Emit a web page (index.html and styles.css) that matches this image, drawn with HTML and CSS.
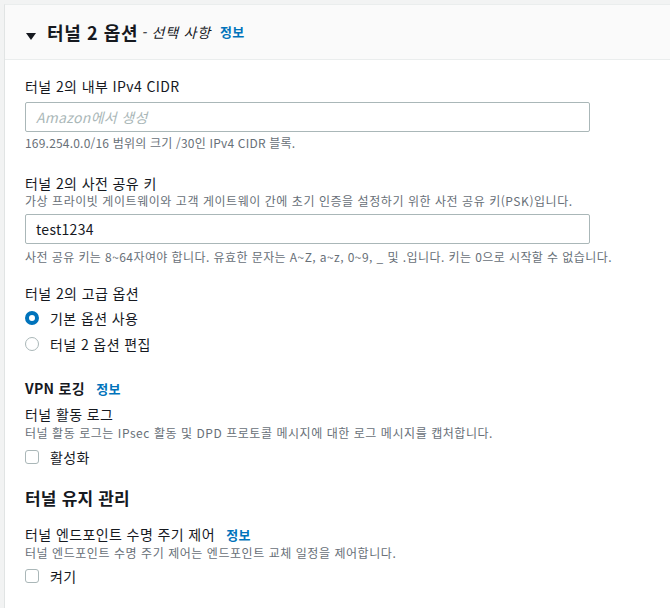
FILE: index.html
```html
<!DOCTYPE html>
<html lang="ko">
<head>
<meta charset="utf-8">
<link rel="stylesheet" href="styles.css">
</head>
<body>
<div class="panel">
  <div class="header">
    <span class="caret"></span>
    <h2 class="title">터널 2 옵션</h2>
    <span class="optional">- 선택 사항</span>
    <a class="info">정보</a>
  </div>
  <div class="content">
    <div class="field f1">
      <div class="label">터널 2의 내부 IPv4 CIDR</div>
      <div class="input placeholder">Amazon에서 생성</div>
      <div class="hint">169.254.0.0/16 범위의 크기 /30인 IPv4 CIDR 블록.</div>
    </div>
    <div class="field f2">
      <div class="label">터널 2의 사전 공유 키</div>
      <div class="desc">가상 프라이빗 게이트웨이와 고객 게이트웨이 간에 초기 인증을 설정하기 위한 사전 공유 키(PSK)입니다.</div>
      <div class="input">test1234</div>
      <div class="hint">사전 공유 키는 8~64자여야 합니다. 유효한 문자는 A~Z, a~z, 0~9, _ 및 .입니다. 키는 0으로 시작할 수 없습니다.</div>
    </div>
    <div class="field f3">
      <div class="label">터널 2의 고급 옵션</div>
      <div class="radios">
        <div class="radio-row"><span class="radio checked"></span><span>기본 옵션 사용</span></div>
        <div class="radio-row"><span class="radio"></span><span>터널 2 옵션 편집</span></div>
      </div>
    </div>
    <div class="section s1">
      <div class="subhead">VPN 로깅 <a class="info">정보</a></div>
      <div class="label">터널 활동 로그</div>
      <div class="desc">터널 활동 로그는 IPsec 활동 및 DPD 프로토콜 메시지에 대한 로그 메시지를 캡처합니다.</div>
      <div class="check-row"><span class="checkbox"></span><span>활성화</span></div>
    </div>
    <div class="section s2">
      <div class="heading">터널 유지 관리</div>
      <div class="label">터널 엔드포인트 수명 주기 제어 <a class="info">정보</a></div>
      <div class="desc">터널 엔드포인트 수명 주기 제어는 엔드포인트 교체 일정을 제어합니다.</div>
      <div class="check-row"><span class="checkbox"></span><span>켜기</span></div>
    </div>
  </div>
</div>
</body>
</html>
```
FILE: styles.css
```css
html, body {
  margin: 0;
  padding: 0;
}
body {
  background: #f2f3f3;
  padding: 4px 0 0 4px;
  font-family: "Noto Sans CJK KR", "Noto Sans", sans-serif;
  color: #16191f;
  font-size: 14px;
  height: 604px;
  overflow: hidden;
}
.panel {
  background: #ffffff;
  border-left: 1px solid #e1e4e4;
  border-top: 1px solid #eaeded;
  height: 100%;
}
.header {
  background: #fafafa;
  height: 55px;
  border-bottom: 1px solid #eaeded;
  display: flex;
  align-items: center;
  padding-left: 21px;
  box-sizing: border-box;
}
.caret {
  width: 0;
  height: 0;
  border-left: 5px solid transparent;
  border-right: 5px solid transparent;
  border-top: 7px solid #16191f;
  margin-top: 8px;
  margin-right: 11px;
}
.title {
  margin: 0;
  font-size: 18px;
  font-weight: 700;
  line-height: 22px;
  letter-spacing: 0.6px;
}
.optional {
  font-size: 14px;
  font-style: italic;
  margin-left: 3px;
  line-height: 22px;
  letter-spacing: 0.8px;
}
.info {
  color: #0073bb;
  font-size: 13px;
  font-weight: 700;
  margin-left: 9px;
  line-height: 22px;
  letter-spacing: 0.3px;
}
.content {
  padding: 16px 0 0 20px;
}
.label {
  font-size: 14px;
  line-height: 20px;
  letter-spacing: 0.4px;
}
.desc {
  font-size: 12px;
  line-height: 16px;
  color: #687078;
  letter-spacing: 0.55px;
}
.input {
  width: 565px;
  height: 30px;
  box-sizing: border-box;
  border: 1px solid #aab7b8;
  border-radius: 2px;
  padding: 0 10px;
  display: flex;
  align-items: center;
  font-size: 14px;
  letter-spacing: 0.3px;
}
.placeholder {
  color: #aab7b8;
  font-style: italic;
}
.hint {
  font-size: 12px;
  line-height: 16px;
  color: #687078;
  letter-spacing: 0.42px;
}
.f1 .input { margin-top: 6px; }
.f1 .hint { margin-top: 3px; letter-spacing: 0.2px; }
.f2 { margin-top: 22px; }
.f2 .input { margin-top: 5px; }
.f2 .hint { margin-top: 5px; }
.f3 { margin-top: 18px; }
.radios { margin-top: 2px; }
.radio-row, .check-row {
  display: flex;
  align-items: center;
  gap: 11px;
  height: 26px;
  line-height: 22px;
  letter-spacing: 0.4px;
}
.radio {
  width: 14px;
  height: 14px;
  box-sizing: border-box;
  border-radius: 50%;
  border: 1.5px solid #aab7b8;
  background: #fff;
  flex: none;
}
.radio.checked {
  border: 4px solid #0073bb;
}
.checkbox {
  width: 14px;
  height: 14px;
  box-sizing: border-box;
  border: 1.5px solid #aab7b8;
  border-radius: 3px;
  flex: none;
}
.s1 { margin-top: 20px; }
.subhead {
  font-size: 14px;
  font-weight: 700;
  line-height: 22px;
  letter-spacing: 0.3px;
}
.s1 .label { margin-top: 4px; }
.s1 .desc { margin-top: 1px; }
.s1 .check-row { margin-top: 3px; }
.s2 { margin-top: 16px; }
.heading {
  font-size: 17px;
  font-weight: 700;
  line-height: 24px;
  letter-spacing: 0.2px;
}
.s2 .label { margin-top: 14px; }
.s2 .desc { margin-top: -1px; }
.s2 .check-row { margin-top: 2px; }
.label .info, .subhead .info {
  margin-left: 7px;
}
```
